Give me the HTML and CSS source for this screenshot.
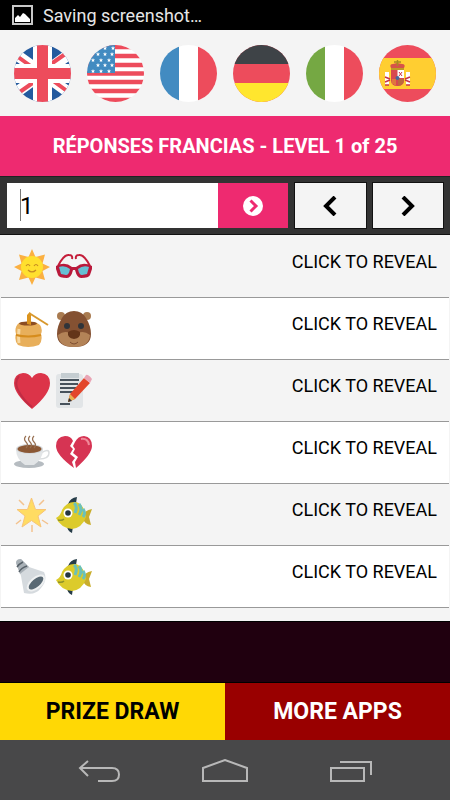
FILE: index.html
```html
<!DOCTYPE html>
<html lang="en">
<head>
    <meta charset="UTF-8">
    <meta name="viewport" content="width=device-width, initial-scale=1.0">
    <title>Réponses Francias</title>
    <link rel="stylesheet" href="styles.css">
</head>
<body>
    <div class="status-bar">
        <svg class="status-icon" viewBox="0 0 21 20">
            <rect x="1" y="1" width="19" height="18" fill="none" stroke="#c8c8c8" stroke-width="2"/>
            <path d="M3 17v-4l3-3 2 2 3-4 2 1 5 5v3z" fill="#fff"/>
        </svg>
        <span>Saving screenshot…</span>
    </div>

    <nav class="flags">
        <a href="#en" aria-label="English">
            <svg viewBox="0 0 57 57">
                <rect width="57" height="57" fill="#245a9e"/>
                <path d="M0 8l57 41M57 8L0 49" stroke="#fff" stroke-width="11"/>
                <path d="M0 9l18 13M37 19L57 5M20 37L0 51M38 35l19 14" stroke="#ed4c5c" stroke-width="4"/>
                <path d="M28.500 0v57M0 28.500h57" stroke="#fff" stroke-width="19"/>
                <path d="M28.500 0v57M0 28.500h57" stroke="#ed4c5c" stroke-width="11"/>
            </svg>
        </a>
        <a href="#us" aria-label="American">
            <svg viewBox="0 0 57 57">
                <rect width="57" height="57" fill="#fff"/>
                <path d="M0 2h57M0 11h57M0 20h57M0 28.500h57M0 37h57M0 46h57M0 55h57" stroke="#ed4c5c" stroke-width="4.500"/>
                <rect width="28" height="28" fill="#428bc1"/>
                <g fill="#fff">
                    <path id="star" d="M18 1l.6 1.400 1.500.1-1.200 1 .4 1.500-1.300-.8-1.300.8.4-1.500-1.200-1 1.500-.1z"/>
                    <use href="#star" x="8"/>
                    <use href="#star" x="-7" y="6"/>
                    <use href="#star" x="0" y="6"/>
                    <use href="#star" x="7" y="6"/>
                    <use href="#star" x="-12" y="12"/>
                    <use href="#star" x="-4" y="12"/>
                    <use href="#star" x="4" y="12"/>
                    <use href="#star" x="-7" y="17"/>
                    <use href="#star" x="0" y="17"/>
                    <use href="#star" x="7" y="17"/>
                    <use href="#star" x="-12" y="23"/>
                    <use href="#star" x="-4" y="23"/>
                    <use href="#star" x="4" y="23"/>
                </g>
            </svg>
        </a>
        <a href="#fr" aria-label="French">
            <svg viewBox="0 0 57 57">
                <rect width="57" height="57" fill="#fff"/>
                <rect width="19" height="57" fill="#428bc1"/>
                <rect x="38" width="19" height="57" fill="#ed4c5c"/>
            </svg>
        </a>
        <a href="#de" aria-label="German">
            <svg viewBox="0 0 57 57">
                <rect width="57" height="57" fill="#ed4c5c"/>
                <rect width="57" height="19" fill="#3e4347"/>
                <rect y="38" width="57" height="19" fill="#ffe62e"/>
            </svg>
        </a>
        <a href="#it" aria-label="Italian">
            <svg viewBox="0 0 57 57">
                <rect width="57" height="57" fill="#fff"/>
                <rect width="19" height="57" fill="#75a843"/>
                <rect x="38" width="19" height="57" fill="#ed4c5c"/>
            </svg>
        </a>
        <a href="#es" aria-label="Spanish">
            <svg viewBox="0 0 57 57">
                <rect width="57" height="57" fill="#ed4c5c"/>
                <rect y="13" width="57" height="31" fill="#ffce31"/>
                <path d="M8 27v13M29 27v13" stroke="#fff" stroke-width="4"/>
                <path d="M6 32l5 2M6 37l5-2M26 34l5-2M26 35l5 2M6 40h4M27 40h4" stroke="#c8364a" stroke-width="1.500"/>
                <path d="M12 25h13v10q0 6-6.500 6T12 35z" fill="#d8484f"/>
                <path d="M18.500 25H25v8h-6.500z" fill="#fff"/>
                <path d="M20 27l3 4M23 27l-3 4" stroke="#c8364a"/>
                <path d="M14 34v5M16 34v6" stroke="#e8a62f"/>
                <path d="M19 34h6v2q-1 4-6 5z" fill="#bd683f"/>
                <circle cx="18.500" cy="33" r="2" fill="#46669c"/>
                <path d="M12 23q-2-4 2-4l4-1 5 1q4 0 2 4z" fill="#d65349"/>
                <path d="M12 24h13M18.500 15v6M15 17h7" stroke="#a98b20" stroke-width="1.500"/>
            </svg>
        </a>
    </nav>

    <h1 class="title">RÉPONSES FRANCIAS - LEVEL 1 of 25</h1>

    <form class="level-form" onsubmit="return false">
        <div class="level-field">
            <input type="text" id="level" name="level" value="1" aria-label="Level">
            <span class="caret"></span>
            <button type="submit" class="btn-go" aria-label="Go">
                <svg viewBox="0 0 20 20">
                    <circle cx="10" cy="10" r="10" fill="#fff"/>
                    <path d="M7.500 4.500L13 10l-5.500 5.500" fill="none" stroke="#ee2a70" stroke-width="3"/>
                </svg>
            </button>
        </div>
        <button type="button" class="btn-step" aria-label="Previous level">
            <svg viewBox="0 0 20 20"><path d="M15 1L6 10l9 9" fill="none" stroke="#000" stroke-width="4"/></svg>
        </button>
        <button type="button" class="btn-step" aria-label="Next level">
            <svg viewBox="0 0 20 20"><path d="M5 1l9 9-9 9" fill="none" stroke="#000" stroke-width="4"/></svg>
        </button>
    </form>

    <ul class="answers">
        <li>
            <div class="emojis">
                <!-- sun -->
                <svg viewBox="0 0 36 36">
                    <path d="M18 0l3.500 8L31 5.500 28.500 14.500 36 18l-7.500 4L31 31l-9.500-2.500L18 36l-3.500-7.500L5 31l2.500-9L0 18l7.500-3.500L5 5.500 14.500 8z" fill="#fbb041"/>
                    <circle cx="18" cy="18" r="11" fill="#ffe02e"/>
                    <path d="M12 17q2-3 4 0M20 17q2-3 4 0M14 21q4 4 8 0" fill="none" stroke="#c68b22" stroke-width="1.200"/>
                </svg>
                <!-- glasses -->
                <svg viewBox="0 0 36 36">
                    <path d="M2 17Q8 5 13 6q4 0 3 4M34 17Q28 5 23 6q-4 0-3 4" fill="none" stroke="#c41e3a" stroke-width="2"/>
                    <path d="M0 17q9-5 16 1h4q7-6 16-1v3l-2 6q-1 3-9 3-4 0-6-8h-2q-2 8-6 8-8 0-9-3l-2-6z" fill="#b9193b"/>
                    <path d="M3 18q6-2 11 2-1 6-4 6l-5-1zM33 18q-6-2-11 2 1 6 4 6l5-1z" fill="#67bfd3"/>
                </svg>
            </div>
            <button type="button" class="reveal">CLICK TO REVEAL</button>
        </li>
        <li>
            <div class="emojis">
                <!-- honey pot -->
                <svg viewBox="0 0 36 36">
                    <path d="M5 12q10-3 18 0l3 2q3 4 1 9 2 6-2 11-11 4-21 0-4-5-2-11-2-7 3-11z" fill="#e8af5b"/>
                    <path d="M5 18q-1 8 0 14" fill="none" stroke="#f7d9a2" stroke-width="3"/>
                    <path d="M2 24q12 3 25 0" fill="none" stroke="#d68c1c" stroke-width="2"/>
                    <ellipse cx="14" cy="12.500" rx="9" ry="2" fill="#8c4d22"/>
                    <path d="M13 13V4l3-3 1 3v10z" fill="#dc941d"/>
                    <path d="M15 2l19 12" stroke="#d8982d" stroke-width="2"/>
                </svg>
                <!-- bear -->
                <svg viewBox="0 0 36 36">
                    <circle cx="5" cy="5" r="4" fill="#a97b50"/>
                    <circle cx="31" cy="5" r="4" fill="#a97b50"/>
                    <path d="M18 0q8 0 12 7 5 8 5 16 0 13-17 13T1 23Q1 15 6 7q4-7 12-7z" fill="#845132"/>
                    <path d="M2 24q6-5 12-2h8q6-3 12 2-1 12-16 12T2 24z" fill="#b38357"/>
                    <circle cx="11" cy="15" r="3" fill="#30343a"/>
                    <circle cx="25" cy="15" r="3" fill="#30343a"/>
                    <path d="M12 21q6-4 12 0 1 6-6 7-7-1-6-7z" fill="#633519"/>
                    <path d="M14 31q4 4 8 0" fill="none" stroke="#7c4c2f"/>
                </svg>
            </div>
            <button type="button" class="reveal">CLICK TO REVEAL</button>
        </li>
        <li>
            <div class="emojis">
                <!-- heart -->
                <svg viewBox="0 0 36 36">
                    <path d="M18 5q3-5 9-5 9 1 9 10 0 11-18 26Q0 21 0 10 0 1 9 0q6 0 9 5z" fill="#dc3449"/>
                    <path d="M5 3Q0 9 4 17q5 10 14 17" fill="none" stroke="#c12c44" stroke-width="2"/>
                </svg>
                <!-- note and pencil -->
                <svg viewBox="0 0 36 36">
                    <rect y="1" width="27" height="34" rx="3" fill="#e2e5e7"/>
                    <rect x="5" width="18" height="5" fill="#c5cdd1"/>
                    <path d="M4 7h19M4 11h18M4 15h17M4 19h13M4 31h10" stroke="#47525c" stroke-width="2"/>
                    <path d="M12 29l2-8L28 5l6 5-15 16z" fill="#e3462b"/>
                    <path d="M28 5l2-3q2-1 6 4l-2 4z" fill="#e9a5b5"/>
                    <path d="M12 29l2-8 5 5z" fill="#e8b251"/>
                    <path d="M12 29l1-4 3 3z" fill="#333"/>
                </svg>
            </div>
            <button type="button" class="reveal">CLICK TO REVEAL</button>
        </li>
        <li>
            <div class="emojis">
                <!-- coffee -->
                <svg viewBox="0 0 36 36">
                    <ellipse cx="15" cy="29" rx="15" ry="4" fill="#b6bcc1"/>
                    <path d="M27 18q8-5 8 0 0 6-10 6" fill="none" stroke="#dadddf" stroke-width="1.500"/>
                    <path d="M2 14h27q0 10-9 16h-9Q2 24 2 14z" fill="#e2e5e7"/>
                    <ellipse cx="15.500" cy="14" rx="13.500" ry="5" fill="#d5d9dc"/>
                    <ellipse cx="15.500" cy="14" rx="12" ry="4" fill="#8b5835"/>
                    <path d="M12 13q3-3 0-6t0-6M16 13q3-3 0-6t0-6M20 13q3-3 0-6t0-6" fill="none" stroke="#987052" stroke-width="1.200"/>
                </svg>
                <!-- broken heart -->
                <svg viewBox="0 0 36 36">
                    <path d="M17 6q-2-5-8-5Q0 2 0 11t18 22l-2-6 3-4-5-4 3-5-3-3z" fill="#d63453"/>
                    <path d="M19 7q3-6 9-6 8 1 8 10 0 8-16 22l-1-6 3-5-5-4 2-4-2-3z" fill="#d63453"/>
                    <path d="M25 4q7-1 8 6" fill="none" stroke="#f0899a" stroke-width="2"/>
                </svg>
            </div>
            <button type="button" class="reveal">CLICK TO REVEAL</button>
        </li>
        <li>
            <div class="emojis">
                <!-- glowing star -->
                <svg viewBox="0 0 36 36">
                    <path d="M17.500 1l4 11.500H32L24 19l3 11-9.500-6.500L8 30l3-11-8-6.500h10.500z" fill="#ffdc62" stroke="#f8c477"/>
                    <path d="M5 3l5 5M30 3l-5 5M2 27l5-4M34 27l-6-4M18 28v7" stroke="#f3c28e" stroke-width="1.500"/>
                </svg>
                <!-- fish -->
                <svg viewBox="0 0 36 36">
                    <g id="fish">
                        <path d="M12 7q2-6 9-7l-1 6zM11 28q0 6 5 8l1-7z" fill="#263c48"/>
                        <path d="M27 20q1-7 9-8l-3 8 2 8q-7-1-8-7z" fill="#c9ad2b"/>
                        <path d="M0 21q5-3 6-8 5-9 14-8 8 2 10 15-4 11-14 12Q5 31 0 21z" fill="#dccb2b"/>
                        <path d="M18 6q4 3 1 10M23 7q4 5 0 11M27 12q3 4 0 8" fill="none" stroke="#6bc1b8" stroke-width="3"/>
                        <path d="M2 23q4 1 6-1" fill="none" stroke="#8d922a" stroke-width="1.500"/>
                        <circle cx="12" cy="16" r="4.500" fill="#fff"/>
                        <circle cx="12" cy="16" r="2.800" fill="#253640"/>
                    </g>
                </svg>
            </div>
            <button type="button" class="reveal">CLICK TO REVEAL</button>
        </li>
        <li>
            <div class="emojis">
                <!-- flashlight -->
                <svg viewBox="0 0 36 36">
                    <path d="M2 4q0-4 5-4l8 8 15 5q4 8-3 16-6 8-17 5L7 17z" fill="#d5dade"/>
                    <path d="M2 4q0-4 5-4l8 8-9 7z" fill="#a8b0b6"/>
                    <path d="M3 8q2-3 6-5M5 13q2-4 8-6" fill="none" stroke="#566068" stroke-width="1.500"/>
                    <ellipse cx="22" cy="24" rx="11" ry="6" transform="rotate(-40 22 24)" fill="#eef0f1"/>
                    <ellipse cx="22" cy="24" rx="9" ry="4" transform="rotate(-40 22 24)" fill="#596974"/>
                </svg>
                <svg viewBox="0 0 36 36"><use href="#fish"/></svg>
            </div>
            <button type="button" class="reveal">CLICK TO REVEAL</button>
        </li>
    </ul>

    <div class="spacer"></div>

    <div class="promo">
        <a href="#prize" class="prize">PRIZE DRAW</a>
        <a href="#apps" class="apps">MORE APPS</a>
    </div>

    <div class="nav-bar">
        <button type="button" aria-label="Back">
            <svg viewBox="0 0 48 24"><path d="M13 2L5 9l8 8M5 9h32q7 0 7 6.500T37 22H23" /></svg>
        </button>
        <button type="button" aria-label="Home">
            <svg viewBox="0 0 48 24"><path d="M2 22V9l22-8 22 8v13z"/></svg>
        </button>
        <button type="button" aria-label="Recent apps">
            <svg viewBox="0 0 48 24"><path d="M4 9h33v13H4zM13 3h31v13"/></svg>
        </button>
    </div>
</body>
</html>
```

FILE: styles.css
```css
* {
    box-sizing: border-box;
}

body {
    margin: 0;
    min-height: 100vh;
    display: flex;
    flex-direction: column;
    font-family: Roboto, Arial, sans-serif;
    background-color: #20000f;
    color: #000000;
}

svg {
    display: block;
}

button {
    padding: 0;
    border: none;
    font-family: inherit;
    cursor: pointer;
}

.status-bar {
    display: flex;
    align-items: center;
    gap: 10px;
    height: 30px;
    padding: 0 12px;
    background-color: #000000;
    color: #e6e6e6;
    font-size: 18px;
}

.status-icon {
    width: 21px;
    height: 20px;
}

.flags {
    display: flex;
    justify-content: space-between;
    align-items: center;
    height: 86px;
    padding: 0 14px;
    background-color: #f4f4f4;
}

.flags svg {
    width: 57px;
    height: 57px;
    border-radius: 50%;
}

.title {
    margin: 0;
    background-color: #ee2a70;
    color: #ffffff;
    font-size: 20px;
    font-weight: bold;
    line-height: 60px;
    text-align: center;
}

.level-form {
    display: grid;
    grid-template-columns: 4fr 1fr 1fr;
    gap: 7px;
    padding: 7px;
    background-color: #333333;
    box-shadow: inset 0 1px #222222, inset 0 -1px #111111;
}

.level-field {
    position: relative;
    display: grid;
    grid-template-columns: 3fr 1fr;
    height: 45px;
}

.level-field input {
    min-width: 0;
    padding: 0 13px;
    border: none;
    border-radius: 0;
    background-color: #ffffff;
    font-family: inherit;
    font-size: 24px;
    outline: none;
}

.caret {
    position: absolute;
    left: 13px;
    top: 6px;
    width: 1px;
    height: 32px;
    background-color: #777777;
}

.btn-go {
    background-color: #ee2a70;
}

.btn-step {
    background-color: #f4f4f4;
    box-shadow: 0 0 0 1px #111111;
}

.level-form svg {
    width: 20px;
    height: 20px;
    margin: 0 auto;
}

.answers {
    margin: 0;
    padding: 1px 1px 13px;
    list-style: none;
    background-color: #f4f4f4;
}

.answers li {
    display: flex;
    justify-content: space-between;
    align-items: flex-start;
    height: 62px;
    padding: 13px 12px 0 13px;
    border-bottom: 1px solid #999999;
}

.answers li:nth-child(even) {
    background-color: #ffffff;
}

.emojis {
    display: flex;
    gap: 6px;
}

.emojis svg {
    width: 36px;
    height: 36px;
}

.reveal {
    background: none;
    color: #000000;
    font-size: 18px;
    line-height: 26px;
}

.spacer {
    flex: 1;
    min-height: 20px;
    border-top: 1px solid #000000;
    border-bottom: 1px solid #000000;
}

.promo {
    display: flex;
}

.promo a {
    flex: 1;
    font-size: 23px;
    font-weight: bold;
    line-height: 57px;
    text-align: center;
    text-decoration: none;
}

.prize {
    background-color: #ffd805;
    color: #000000;
}

.apps {
    background-color: #990000;
    color: #ffffff;
}

.nav-bar {
    display: flex;
    justify-content: center;
    align-items: center;
    gap: 78px;
    height: 60px;
    padding-top: 2px;
    background-color: #484849;
}

.nav-bar button {
    background: none;
}

.nav-bar svg {
    width: 48px;
    height: 24px;
    fill: none;
    stroke: #b8b8b8;
    stroke-width: 2;
}
```
